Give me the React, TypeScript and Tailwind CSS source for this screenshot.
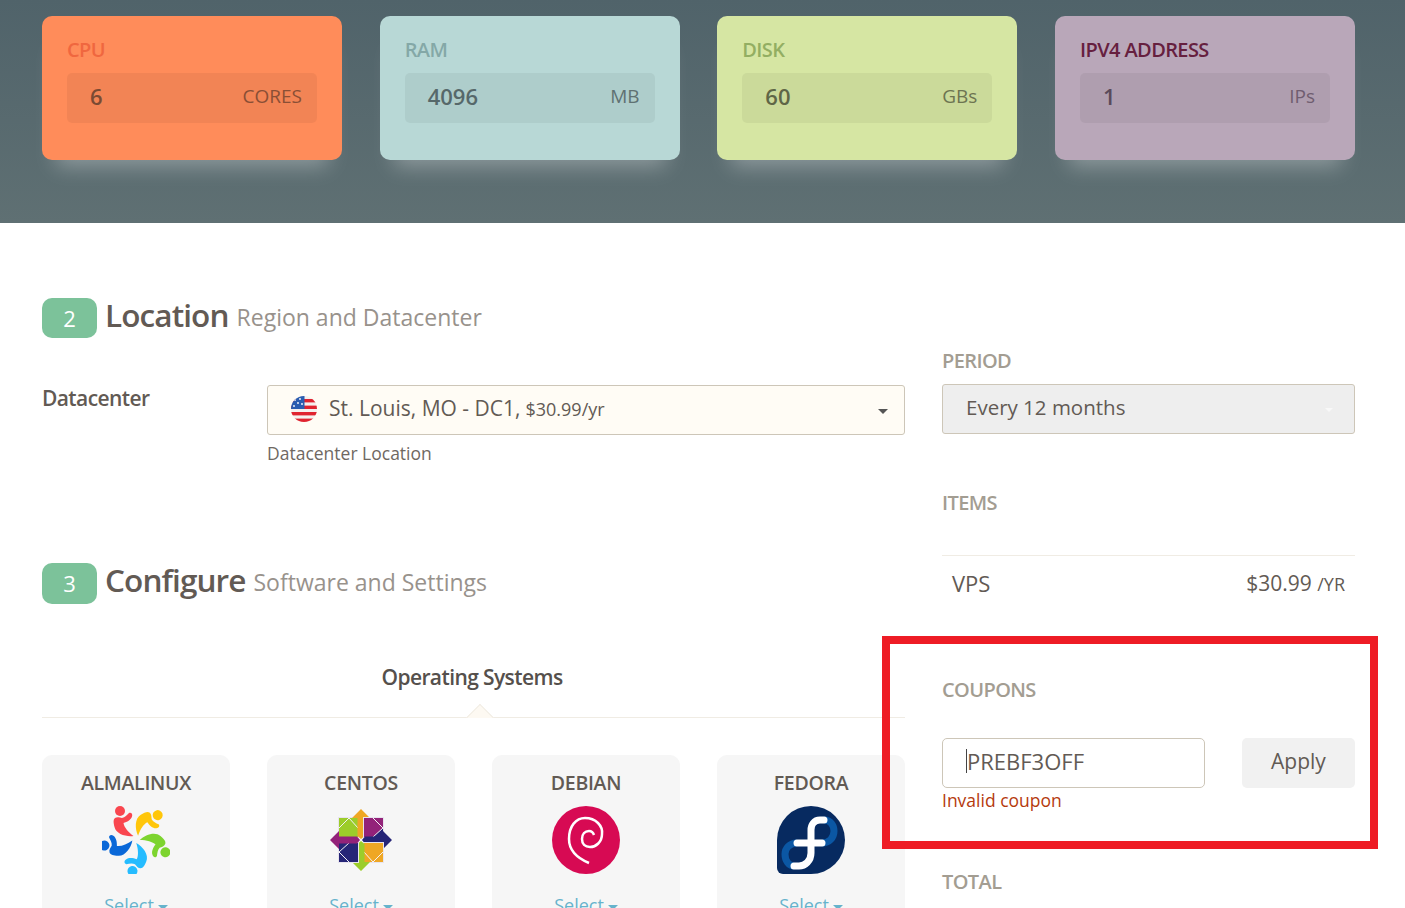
import type { ReactNode } from 'react';

interface Resource {
  label: string;
  value: string;
  unit: string;
  cardClass: string;
  labelClass: string;
  valueClass: string;
  unitClass: string;
}

const resources: Resource[] = [
  {
    label: 'CPU',
    value: '6',
    unit: 'CORES',
    cardClass: 'bg-[#ff8c5a]',
    labelClass: 'text-[#f0673f]',
    valueClass: 'text-[#7a4a33]',
    unitClass: 'text-[#8a4f35]'
  },
  {
    label: 'RAM',
    value: '4096',
    unit: 'MB',
    cardClass: 'bg-[#b8d8d6]',
    labelClass: 'text-[#84a8a7]',
    valueClass: 'text-[#56686a]',
    unitClass: 'text-[#5f7172]'
  },
  {
    label: 'DISK',
    value: '60',
    unit: 'GBs',
    cardClass: 'bg-[#d6e6a3]',
    labelClass: 'text-[#93ae62]',
    valueClass: 'text-[#5f6646]',
    unitClass: 'text-[#6d7451]'
  },
  {
    label: 'IPV4 ADDRESS',
    value: '1',
    unit: 'IPs',
    cardClass: 'bg-[#b9a7b9]',
    labelClass: 'text-[#66203f]',
    valueClass: 'text-[#5a4a5a]',
    unitClass: 'text-[#6f5d6f]'
  }
];

function AlmaLogo() {
  const colors = ['#f9464f', '#ffc60a', '#7dd42f', '#25bcff', '#0a68d8'];
  return (
    <svg viewBox="0 0 68 68" className="size-[68px]">
      {colors.map((color, i) => (
        <g key={color} fill={color} transform={`rotate(${i * 72} 34 33)`}>
          <circle cx="18" cy="5" r="5" />
          <path d="M31.5 30 C24 31 14 28 12.5 21 C11.5 17 11 13.5 13 12 C15 10.5 18 11.5 20 12 C23 11.5 25 9 27 7 C29 6 31 8 30 10.5 C29 14 25 16 21.5 17 C22 21 26 26 31.5 30 Z" />
        </g>
      ))}
    </svg>
  );
}

function CentosLogo() {
  const quadrants = [
    { rotate: 0, square: '#9ccd2a', corner: '#9ccd2a', arrow: '#efa724' },
    { rotate: 90, square: '#932279', corner: '#262577', arrow: '#262577' },
    { rotate: 180, square: '#efa724', corner: '#efa724', arrow: '#9ccd2a' },
    { rotate: 270, square: '#262577', corner: '#262577', arrow: '#932279' }
  ];
  return (
    <svg viewBox="0 0 68 68" className="size-[68px]">
      {quadrants.map((q) => (
        <g key={q.rotate} transform={`rotate(${q.rotate} 34 34)`}>
          <rect x="11.5" y="11.5" width="20" height="20" fill={q.square} stroke="#e8e4ee" strokeWidth="1" />
          <polygon points="22,12 31,12 31,22" fill={q.corner} />
          <path d="M12 22 L22 12 L31 22" fill="none" stroke="#f4f2f4" strokeWidth="1" />
          <polygon points="34,3 43,12 37.5,12 37.5,30 34,33 30.5,30 30.5,12 25,12" fill={q.arrow} />
        </g>
      ))}
    </svg>
  );
}

function DebianLogo() {
  return (
    <svg viewBox="0 0 68 68" className="size-[68px]">
      <circle cx="34" cy="34" r="34" fill="#d70a53" />
      <path
        d="M37 57 C25 52 17 44 17 33 C17 20 24 12 33 12 C44 12 51 20 50 28 C50 36 44 41 38 41 C33 41 30 38 30 33 C30 28 33 25 37 25 C39 25 41 26 42 29"
        fill="none"
        stroke="#fff"
        strokeWidth="2.5"
      />
    </svg>
  );
}

function FedoraLogo() {
  return (
    <svg viewBox="0 0 68 68" className="size-[68px]">
      <path d="M34 0 A34 34 0 1 1 34 68 H6 A6 6 0 0 1 0 62 V34 A34 34 0 0 1 34 0 Z" fill="#072a60" />
      <path
        d="M47 14 C54 14 57 20 57 25 C57 32 52 37 45 37 M20 37 C12 37 8 43 8 48 C8 55 12 60 17 60"
        fill="none"
        stroke="#0b57a4"
        strokeWidth="7"
      />
      <path
        d="M47 14 H43 C37 14 34 19 34 24 V47 C34 55 28 60 22 60 H17 M20 37 H45"
        fill="none"
        stroke="#fff"
        strokeWidth="7"
        strokeLinecap="round"
      />
    </svg>
  );
}

function FlagIcon() {
  return (
    <svg viewBox="0 0 26 26" className="size-[26px] shrink-0">
      <defs>
        <clipPath id="flag-circle">
          <circle cx="13" cy="13" r="13" />
        </clipPath>
      </defs>
      <g clipPath="url(#flag-circle)">
        <rect width="26" height="26" fill="#f5f0ee" />
        <rect y="3" width="26" height="3.4" fill="#e0232f" />
        <rect y="9.6" width="26" height="3.4" fill="#e0232f" />
        <rect y="16" width="26" height="3.4" fill="#e0232f" />
        <rect y="22.6" width="26" height="3.4" fill="#e0232f" />
        <rect width="13.5" height="13" fill="#2b5db0" />
        <circle cx="4" cy="4" r="0.9" fill="#fff" />
        <circle cx="9" cy="3" r="0.9" fill="#fff" />
        <circle cx="7" cy="7" r="0.9" fill="#fff" />
        <circle cx="11" cy="8" r="0.9" fill="#fff" />
        <circle cx="3" cy="10" r="0.9" fill="#fff" />
      </g>
    </svg>
  );
}

const systems: { name: string; logo: ReactNode }[] = [
  { name: 'ALMALINUX', logo: <AlmaLogo /> },
  { name: 'CENTOS', logo: <CentosLogo /> },
  { name: 'DEBIAN', logo: <DebianLogo /> },
  { name: 'FEDORA', logo: <FedoraLogo /> }
];

function SectionTitle({ step, title, sub, className }: { step: string; title: string; sub: string; className: string }) {
  return (
    <div className={`flex items-center ${className}`}>
      <div className="flex h-full w-[55px] items-center justify-center rounded-[10px] bg-[#7cc29a] text-[22px] text-white">
        {step}
      </div>
      <h2 className="mb-[7px] ml-2 text-[31.5px] leading-none font-semibold tracking-[-0.9px] text-[#625a54]">{title}</h2>
      <span className="mb-[2px] ml-[8px] text-[23px] text-[#98928c]">{sub}</span>
    </div>
  );
}

function SideLabel({ children, className = '' }: { children: ReactNode; className?: string }) {
  return <div className={`h-5 text-[20px] leading-5 font-semibold tracking-[-0.6px] text-[#a39d92] ${className}`}>{children}</div>;
}

export default function App() {
  return (
    <div className="relative h-[908px] overflow-hidden bg-white font-['Open_Sans',sans-serif] text-[#625a54]">
      <header className="flex h-[223px] justify-between bg-linear-to-b from-[#50636a] to-[#5f7073] pt-4 pr-[50px] pl-[42px]">
        {resources.map((r) => (
          <div
            key={r.label}
            className={`h-36 w-[300px] rounded-[10px] px-[25px] pt-6 shadow-[0_20px_20px_-14px_rgba(255,255,255,0.32)] ${r.cardClass}`}
          >
            <div className={`h-5 text-[20px] leading-5 font-semibold tracking-[-0.6px] ${r.labelClass}`}>{r.label}</div>
            <div className="mt-[13px] flex h-[50px] items-center justify-between rounded-[5px] bg-black/5 px-[15px] pb-[3px]">
              <span className={`ml-2 text-[22px] font-semibold ${r.valueClass}`}>{r.value}</span>
              <span className={`text-[19px] ${r.unitClass}`}>{r.unit}</span>
            </div>
          </div>
        ))}
      </header>

      <main className="flex justify-between pr-[50px] pl-[42px]">
        <div className="w-[863px] pt-[75px]">
          <SectionTitle step="2" title="Location" sub="Region and Datacenter" className="h-10" />

          <div className="mt-[47px] flex">
            <div className="w-[225px] text-[21px] leading-[26px] font-semibold tracking-[-0.6px]">Datacenter</div>
            <div className="flex-1">
              <div className="relative flex h-[50px] items-center gap-3 rounded-[3px] border border-[#cdc6b8] bg-[#fffcf5] pb-[2px] pl-[23px]">
                <FlagIcon />
                <span className="text-[21px] text-[#625a54]">St. Louis, MO - DC1,</span>
                <span className="-ml-[7px] text-[18px]">$30.99/yr</span>
                <span className="absolute top-[23px] right-4 border-x-[5px] border-t-[5px] border-x-transparent border-t-[#555]" />
              </div>
              <div className="mt-2 h-5 text-[17.5px] leading-5 text-[#6f6862]">Datacenter Location</div>
            </div>
          </div>

          <SectionTitle step="3" title="Configure" sub="Software and Settings" className="mt-[100px] h-[41px]" />

          <div className="mt-[63px] h-5 pr-[3px] text-center text-[21px] leading-5 font-semibold tracking-[-0.6px] text-[#55504c]">
            Operating Systems
          </div>
          <div className="relative mt-[30px] h-px bg-[#f0ece4]">
            <div className="absolute bottom-0 left-[424px] h-[14px] w-[28px] overflow-hidden">
              <div className="mx-auto mt-[4px] size-[20px] rotate-45 border-t border-l border-[#f0ece4] bg-[#fdf9f2]" />
            </div>
          </div>

          <div className="mt-[37px] flex justify-between">
            {systems.map((os) => (
              <div key={os.name} className="flex h-[300px] w-[188px] flex-col items-center rounded-[10px] bg-[#f6f6f6] pt-4">
                <div className="h-6 text-[19.5px] leading-6 font-semibold tracking-[-0.3px]">{os.name}</div>
                <div className="mt-[11px]">{os.logo}</div>
                <div className="mt-[18px] flex items-center gap-1 text-[18px] text-[#66b3cc]">
                  Select
                  <span className="mt-1 border-x-[5px] border-t-[5px] border-x-transparent border-t-[#66b3cc]" />
                </div>
              </div>
            ))}
          </div>
        </div>

        <aside className="w-[413px] pt-[128px]">
          <SideLabel>PERIOD</SideLabel>
          <div className="relative mt-[13px] flex h-[50px] items-center rounded-[3px] border border-[#cdc6b8] bg-[#eeeeee] pb-[4px] pl-[23px] text-[20.5px]">
            Every 12 months
            <span className="absolute top-[23px] right-[21px] border-x-[4px] border-t-[4px] border-x-transparent border-t-[#f8f8f8]" />
          </div>

          <SideLabel className="mt-[59px]">ITEMS</SideLabel>
          <div className="mt-[42px] flex h-[57px] items-center justify-between border-t border-[#f0ece4] px-[10px] text-[21px]">
            <span className="mb-[2px] text-[22px]">VPS</span>
            <span>
              $30.99 <span className="text-[18px]">/YR</span>
            </span>
          </div>

          <SideLabel className="mt-[68px]">COUPONS</SideLabel>
          <div className="mt-[38px] flex justify-between">
            <div className="flex h-[50px] w-[263px] items-center rounded-[5px] border border-[#cdc6b8] pb-[5px] pl-[23px]">
              <span className="border-l border-[#444] text-[22px] leading-6">PREBF3OFF</span>
            </div>
            <button className="h-[50px] w-[113px] rounded-[5px] bg-[#f1f1f1] pb-[2px] text-[21px]">Apply</button>
          </div>
          <div className="h-6 text-[17.5px] leading-6 text-[#b53a0d]">Invalid coupon</div>

          <SideLabel className="mt-[60px]">TOTAL</SideLabel>
        </aside>
      </main>

      {/* red annotation drawn over the coupon block */}
      <div className="absolute top-[636px] left-[882px] h-[213px] w-[496px] border-[8px] border-[#ee1c25]" />
    </div>
  );
}
